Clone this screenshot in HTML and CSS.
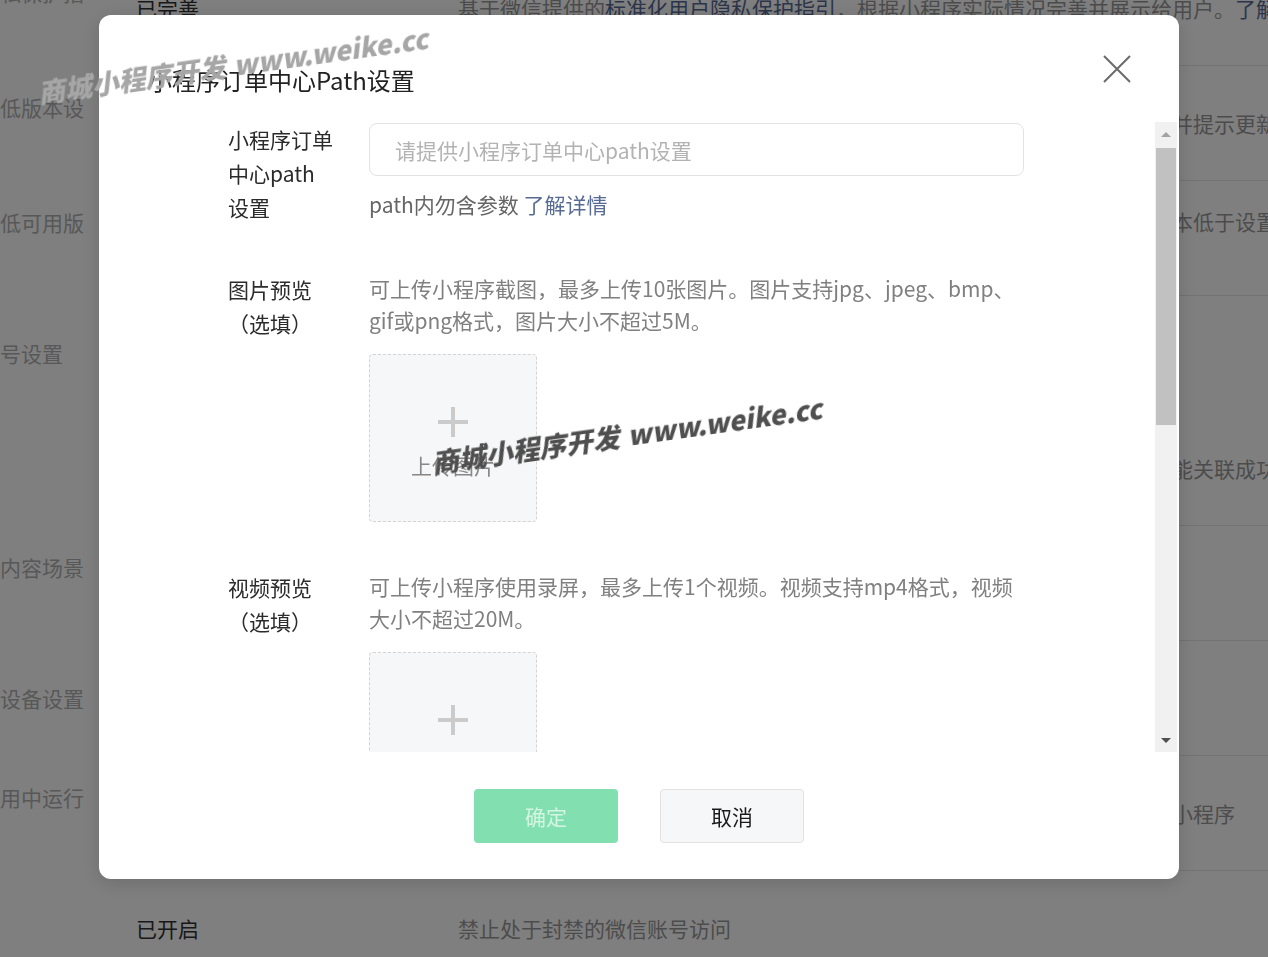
FILE: index.html
```html
<!DOCTYPE html>
<html lang="zh-CN">
<head>
    <meta charset="UTF-8">
    <meta name="viewport" content="width=device-width, initial-scale=1.0">
    <title>小程序订单中心Path设置</title>
    <link rel="stylesheet" href="styles.css">
</head>
<body>
    <!-- 背景页面：功能设置列表 -->
    <div class="page">
        <div class="row">
            <div class="row-label">隐私保护指引</div>
            <div class="row-main">
                <div class="row-value">已完善</div>
                <div class="row-desc">基于微信提供的<span class="link">标准化用户隐私保护指引</span>，根据小程序实际情况完善并展示给用户。<span class="link">了解详情</span></div>
            </div>
        </div>
        <div class="row">
            <div class="row-label">最低版本设置</div>
            <div class="row-main">
                <div class="row-value">2.10.0</div>
                <div class="row-desc">小程序的基础库版本低于最低版本时，用户将无法使用该小程序，微信会拦截并提示更新微信版本</div>
            </div>
        </div>
        <div class="row">
            <div class="row-label">最低可用版本</div>
            <div class="row-main">
                <div class="row-value">未设置</div>
                <div class="row-desc">若用户的微信客户端版本过低，将无法打开小程序，当用户用的微信客户端版本低于设置的最低可用版本时，将提示用户更新</div>
            </div>
        </div>
        <div class="row no-line">
            <div class="row-label">账号设置</div>
            <div class="row-main">
                <div class="row-value">已关联</div>
                <div class="row-desc">可关联公众号、企业微信</div>
            </div>
        </div>
        <div class="row">
            <div class="row-label"></div>
            <div class="row-main">
                <div class="row-value"></div>
                <div class="row-desc">关联的公众号、小程序及企业微信帐号均需完成主体认证，且主体一致时，才能关联成功。</div>
            </div>
        </div>
        <div class="row">
            <div class="row-label">各内容场景下</div>
            <div class="row-main">
                <div class="row-value">未设置</div>
                <div class="row-desc">选择小程序内容所属的场景</div>
            </div>
        </div>
        <div class="row">
            <div class="row-label">多设备设置</div>
            <div class="row-main">
                <div class="row-value">手机</div>
                <div class="row-desc">设置小程序支持运行的设备类型</div>
            </div>
        </div>
        <div class="row">
            <div class="row-label">应用中运行时</div>
            <div class="row-main">
                <div class="row-value">已开启</div>
                <div class="row-desc">开启后，用户可以在企业微信、微信电脑版及车载设备等更多应用中运行你的小程序</div>
            </div>
        </div>
        <div class="row">
            <div class="row-label"></div>
            <div class="row-main">
                <div class="row-value">已开启</div>
                <div class="row-desc">禁止处于封禁的微信账号访问</div>
            </div>
        </div>
    </div>

    <!-- 弹窗 -->
    <div class="mask">
        <div class="dialog">
            <div class="dialog-hd">
                <h3 class="dialog-title">小程序订单中心Path设置</h3>
                <svg class="dialog-close" width="28" height="28" viewBox="0 0 28 28">
                    <path d="M1 1L27 27M27 1L1 27" stroke="#6b6b6b" stroke-width="2" fill="none"/>
                </svg>
            </div>

            <div class="dialog-bd">
                <div class="dialog-content">
                    <div class="form-item">
                        <label class="form-label">小程序订单<br>中心path<br>设置</label>
                        <div class="form-control">
                            <input class="input" type="text" placeholder="请提供小程序订单中心path设置">
                            <p class="tips">path内勿含参数 <a class="link" href="#">了解详情</a></p>
                        </div>
                    </div>

                    <div class="form-item">
                        <label class="form-label">图片预览<br>（选填）</label>
                        <div class="form-control">
                            <p class="desc">可上传小程序截图，最多上传10张图片。图片支持jpg、jpeg、bmp、gif或png格式，图片大小不超过5M。</p>
                            <div class="uploader">
                                <svg width="30" height="30" viewBox="0 0 30 30">
                                    <path d="M15 0V30M0 15H30" stroke="#cbcbcb" stroke-width="4"/>
                                </svg>
                                <span class="uploader-text">上传图片</span>
                            </div>
                        </div>
                    </div>

                    <div class="form-item">
                        <label class="form-label">视频预览<br>（选填）</label>
                        <div class="form-control">
                            <p class="desc">可上传小程序使用录屏，最多上传1个视频。视频支持mp4格式，视频大小不超过20M。</p>
                            <div class="uploader">
                                <svg width="30" height="30" viewBox="0 0 30 30">
                                    <path d="M15 0V30M0 15H30" stroke="#cbcbcb" stroke-width="4"/>
                                </svg>
                                <span class="uploader-text">上传视频</span>
                            </div>
                        </div>
                    </div>
                </div>

                <div class="scrollbar">
                    <div class="scrollbar-btn"><span class="arrow-up"></span></div>
                    <div class="scrollbar-thumb"></div>
                    <div class="scrollbar-track"></div>
                    <div class="scrollbar-btn"><span class="arrow-down"></span></div>
                </div>
            </div>

            <div class="dialog-ft">
                <button class="btn btn-primary" disabled>确定</button>
                <button class="btn btn-default">取消</button>
            </div>
        </div>
    </div>

    <!-- 水印 -->
    <div class="watermark wm-top">商城小程序开发<span class="wm-url">www.weike.cc</span></div>
    <div class="watermark wm-mid">商城小程序开发<span class="wm-url">www.weike.cc</span></div>
</body>
</html>
```

FILE: styles.css
```css
* {
    margin: 0;
    padding: 0;
    box-sizing: border-box;
}

html, body {
    width: 100%;
    height: 100%;
    overflow: hidden;
}

body {
    font-family: "Noto Sans CJK SC", "Noto Sans", sans-serif;
    font-size: 21px;
    color: #333;
    background: #fff;
}

.link {
    color: #576b95;
    text-decoration: none;
}

/* 背景列表 */
.page {
    margin-top: -49px;
    margin-left: -21px;
    width: 1600px;
}

.row {
    display: flex;
    height: 115px;
}

.row-label {
    width: 110px;
    flex-shrink: 0;
    display: flex;
    align-items: center;
    color: #b0b0b0;
    line-height: 33px;
}

.row-main {
    flex: 1;
    margin-left: 31px;
    padding-left: 16px;
    display: flex;
    align-items: center;
    border-bottom: 1px solid #e6e6e6;
}

.row.no-line .row-main {
    border-bottom-color: transparent;
}

.row-value {
    width: 322px;
    flex-shrink: 0;
    color: #333;
}

.row-desc {
    width: 930px;
    color: #999;
    line-height: 33px;
}

/* 弹窗 */
.mask {
    position: fixed;
    top: 0;
    left: 0;
    right: 0;
    bottom: 0;
    background: rgba(0, 0, 0, 0.5);
    display: flex;
    align-items: flex-start;
    padding: 15px 0 0 99px;
}

.dialog {
    width: 1080px;
    height: 864px;
    background: #fff;
    border-radius: 12px;
    box-shadow: 0 4px 20px rgba(0, 0, 0, 0.15);
    display: flex;
    flex-direction: column;
}

.dialog-hd {
    height: 107px;
    flex-shrink: 0;
    display: flex;
    justify-content: space-between;
    align-items: flex-start;
    padding: 40px 48px 0 49px;
}

.dialog-title {
    margin-top: 8px;
    font-size: 24px;
    line-height: 34px;
    font-weight: normal;
    color: #222;
}

.dialog-bd {
    flex: 1;
    min-height: 0;
    display: flex;
}

.dialog-content {
    flex: 1;
    overflow: hidden;
    padding-left: 129px;
}

.form-item {
    display: flex;
    margin-bottom: 48px;
}

.form-label {
    width: 120px;
    margin-right: 21px;
    flex-shrink: 0;
    line-height: 34px;
    color: #2b2b2b;
}

.form-control {
    width: 655px;
}

.input {
    display: block;
    width: 100%;
    height: 53px;
    margin-top: 1px;
    padding: 0 25px;
    border: 1px solid #e3e3e3;
    border-radius: 8px;
    font-family: inherit;
    font-size: 21px;
    color: #333;
    outline: none;
}

.input::placeholder {
    color: #b3b3b3;
}

.tips {
    margin-top: 12px;
    line-height: 33px;
    color: #666;
}

.desc {
    line-height: 32px;
    color: #808080;
}

.uploader {
    width: 168px;
    height: 168px;
    margin-top: 18px;
    padding-top: 52px;
    border: 1px dashed #d3d3d3;
    border-radius: 4px;
    background: #f6f7f8;
    display: flex;
    flex-direction: column;
    align-items: center;
    gap: 12px;
}

.uploader-text {
    line-height: 33px;
    color: #888;
}

/* 滚动条 */
.scrollbar {
    width: 22px;
    margin-right: 2px;
    background: #f1f1f1;
    display: flex;
    flex-direction: column;
}

.scrollbar-btn {
    height: 24px;
    flex-shrink: 0;
    display: flex;
    align-items: center;
    justify-content: center;
}

.arrow-up {
    border-left: 5px solid transparent;
    border-right: 5px solid transparent;
    border-bottom: 5px solid #a3a3a3;
}

.arrow-down {
    border-left: 5px solid transparent;
    border-right: 5px solid transparent;
    border-top: 5px solid #505050;
}

.scrollbar-thumb {
    height: 277px;
    margin: 2px 1px 0;
    background: #c1c1c1;
}

.scrollbar-track {
    flex: 1;
}

/* 底部按钮 */
.dialog-ft {
    flex-shrink: 0;
    display: flex;
    justify-content: center;
    gap: 42px;
    padding: 37px 0 36px;
}

.btn {
    width: 144px;
    height: 54px;
    border-radius: 4px;
    font-family: inherit;
    font-size: 21px;
    display: flex;
    align-items: center;
    justify-content: center;
    cursor: pointer;
}

.btn-primary {
    background: #82e0b0;
    color: #d4f5e3;
    border: none;
}

.btn-default {
    background: #f6f7f8;
    color: #1a1a1a;
    border: 1px solid #e1e1e1;
}

/* 水印 */
.watermark {
    position: absolute;
    white-space: nowrap;
    font-size: 27px;
    font-weight: 900;
    font-style: italic;
    line-height: 40px;
    transform: rotate(-8deg);
}

.wm-url {
    margin-left: 8px;
    letter-spacing: 0;
}

.wm-top {
    left: 36px;
    top: 45px;
    color: #a6a6a6;
}

.wm-mid {
    left: 430px;
    top: 415px;
    color: #4f4f4f;
}
```
